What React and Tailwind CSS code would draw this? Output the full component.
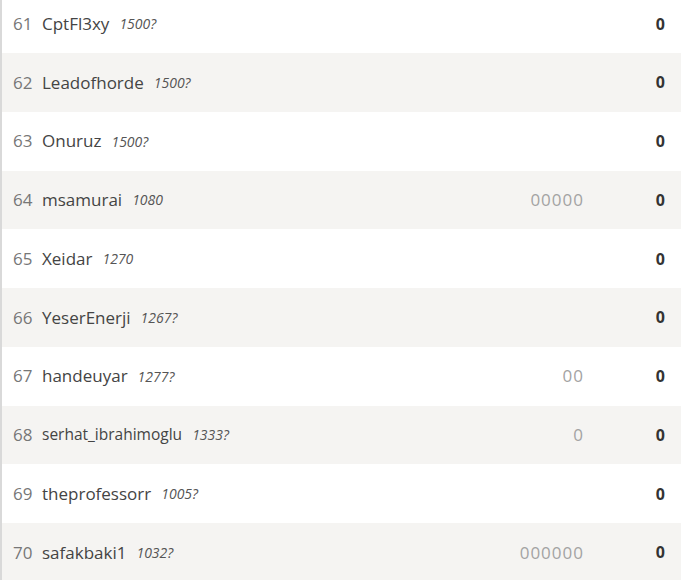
const rows = [
  { n: 61, name: "CptFl3xy", rating: "1500?", mid: "", total: "0" },
  { n: 62, name: "Leadofhorde", rating: "1500?", mid: "", total: "0" },
  { n: 63, name: "Onuruz", rating: "1500?", mid: "", total: "0" },
  { n: 64, name: "msamurai", rating: "1080", mid: "00000", total: "0" },
  { n: 65, name: "Xeidar", rating: "1270", mid: "", total: "0" },
  { n: 66, name: "YeserEnerji", rating: "1267?", mid: "", total: "0" },
  { n: 67, name: "handeuyar", rating: "1277?", mid: "00", total: "0" },
  { n: 68, name: "serhat_ibrahimoglu", rating: "1333?", mid: "0", total: "0", long: true },
  { n: 69, name: "theprofessorr", rating: "1005?", mid: "", total: "0" },
  { n: 70, name: "safakbaki1", rating: "1032?", mid: "000000", total: "0" },
];

export default function App() {
  return (
    <div className="h-[580px] w-[681px] overflow-hidden bg-white font-['Open_Sans',sans-serif]">
      <div className="-mt-[5.75px] border-l-2 border-[#d9d9d9]">
        {rows.map((r, i) => (
          <div
            key={r.n}
            className={`flex h-[58.75px] items-center pl-[11px] pr-[16px] ${i % 2 === 1 ? "bg-[#f5f4f2]" : "bg-white"}`}
          >
            <span className="w-[29px] text-[17px] text-[#777]">{r.n}</span>
            <span className={`${r.long ? "text-[15.5px]" : "text-[17px]"} text-[#444]`}>{r.name}</span>
            <span className="ml-[10px] text-[14px] italic text-[#555]">{r.rating}</span>
            <span className="ml-auto text-[17px] tracking-[1px] text-[#a3a3a3]">{r.mid}</span>
            <span className="w-[81px] text-right text-[16px] font-bold text-[#333]">{r.total}</span>
          </div>
        ))}
      </div>
    </div>
  );
}
